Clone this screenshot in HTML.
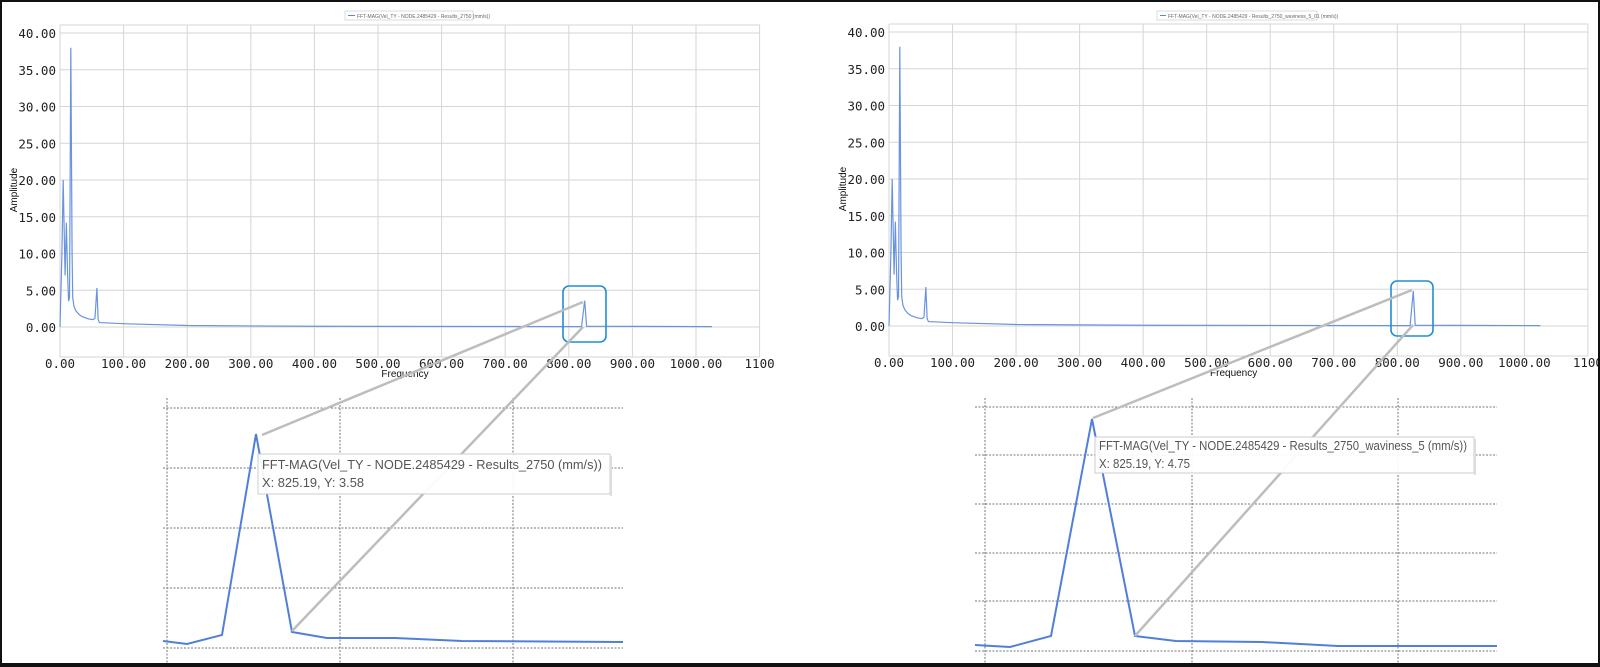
<!DOCTYPE html>
<html><head><meta charset="utf-8"><style>
html,body{margin:0;padding:0;background:#fff;}
svg{display:block}
.t{font-family:"DejaVu Sans Mono","Liberation Mono",monospace;font-size:12.5px;fill:#222}
.s{font-family:"Liberation Sans",sans-serif;font-size:10px;fill:#111}
.tip{font-family:"Liberation Sans",sans-serif;font-size:13px;fill:#555}
</style></head><body>
<svg width="1600" height="667" viewBox="0 0 1600 667" xmlns="http://www.w3.org/2000/svg">
<rect x="0" y="0" width="1600" height="667" fill="#fff"/>
<defs>
<g id="grid">
 <g stroke="#d6d6d6" stroke-width="1" fill="none">
  <path d="M0 -294H700M0 -257.25H700M0 -220.5H700M0 -183.75H700M0 -147H700M0 -110.25H700M0 -73.5H700M0 -36.75H700M0 0H700M0 -302H700M0 30H700"/>
  <path d="M0 -302V30M63.6 -302V30M127.2 -302V30M190.8 -302V30M254.4 -302V30M318 -302V30M381.6 -302V30M445.2 -302V30M508.8 -302V30M572.4 -302V30M636 -302V30M699.6 -302V30"/>
 </g>
 <g class="t" text-anchor="end">
  <text x="-4" y="-289">40.00</text><text x="-4" y="-252">35.00</text><text x="-4" y="-215.5">30.00</text><text x="-4" y="-178.7">25.00</text><text x="-4" y="-142">20.00</text><text x="-4" y="-105.2">15.00</text><text x="-4" y="-68.5">10.00</text><text x="-4" y="-31.7">5.00</text><text x="-4" y="5">0.00</text>
 </g>
 <g class="t" text-anchor="middle">
  <text x="0" y="41">0.00</text><text x="63.6" y="41">100.00</text><text x="127.2" y="41">200.00</text><text x="190.8" y="41">300.00</text><text x="254.4" y="41">400.00</text><text x="318" y="41">500.00</text><text x="381.6" y="41">600.00</text><text x="445.2" y="41">700.00</text><text x="508.8" y="41">800.00</text><text x="572.4" y="41">900.00</text><text x="636" y="41">1000.00</text><text x="699.6" y="41">1100</text>
 </g>
 <text class="s" x="345" y="50" text-anchor="middle" font-size="11.5">Frequency</text>
 <text class="s" x="0" y="0" font-size="11.5" text-anchor="middle" transform="translate(-43,-137) rotate(-90)">Amplitude</text>
</g>
</defs>

<!-- LEFT CHART -->
<g transform="translate(60,327)"><use href="#grid"/></g>
<rect x="345" y="11" width="128" height="9" fill="#fff" stroke="#ccc" stroke-width="0.7"/>
<line x1="348" y1="15.5" x2="355" y2="15.5" stroke="#5b86d8"/>
<text x="357" y="18" font-family="Liberation Sans,sans-serif" font-size="5" fill="#666">FFT-MAG(Vel_TY - NODE.2485429 - Results_2750 (mm/s))</text>
<g transform="translate(60,327) scale(0.636,-7.35)">
<path vector-effect="non-scaling-stroke" fill="none" stroke="#6a93de" stroke-width="1.2" d="M0 0 L3 10 L5 20 L8 7 L10 14.2 L12 7 L13.5 3.5 L15 4 L17 38 L19 10 L20 4 L22 2.8 L25 2.2 L30 1.7 L35 1.4 L45 1.1 L52 1 L55 1.2 L58 5.3 L60 1 L62 0.6 L100 0.45 L200 0.2 L400 0.1 L820 0.05 L825 3.58 L828 0.1 L1025 0.05"/>
</g>
<rect x="563" y="286" width="43" height="56" rx="6" fill="none" stroke="#1f8fd1" stroke-width="1.6"/>

<!-- RIGHT CHART -->
<g transform="translate(889,326) scale(0.999,1)"><use href="#grid"/></g>
<rect x="1157" y="11" width="160" height="9" fill="#fff" stroke="#ccc" stroke-width="0.7"/>
<line x1="1160" y1="15.5" x2="1166" y2="15.5" stroke="#5b86d8"/>
<text x="1168" y="18" font-family="Liberation Sans,sans-serif" font-size="5" fill="#666">FFT-MAG(Vel_TY - NODE.2485429 - Results_2750_waviness_5_01 (mm/s))</text>
<g transform="translate(889,326) scale(0.6355,-7.35)">
<path vector-effect="non-scaling-stroke" fill="none" stroke="#6a93de" stroke-width="1.2" d="M0 0 L3 10 L5 20 L8 7 L10 14.2 L12 7 L13.5 3.5 L15 4 L17 38 L19 10 L20 4 L22 2.8 L25 2.2 L30 1.7 L35 1.4 L45 1.1 L52 1 L55 1.2 L58 5.3 L60 1 L62 0.6 L100 0.45 L200 0.2 L400 0.1 L820 0.05 L825 4.75 L828 0.1 L1025 0.05"/>
</g>
<rect x="1391" y="281" width="42" height="55" rx="6" fill="none" stroke="#1f8fd1" stroke-width="1.6"/>

<!-- LEFT INSET -->
<g stroke="#777" stroke-width="1" stroke-dasharray="2,1.5" fill="none">
 <path d="M163 408H623M163 468H623M163 528H623M163 588H623M163 648H623"/>
 <path d="M167 398V667M340 398V667M513 398V667"/>
</g>
<path d="M163 641L187 644L222 635L256 434L292 632L327 638L395 638L462 641L623 642" fill="none" stroke="#4f7fd9" stroke-width="2"/>
<g stroke="#bdbdbd" stroke-width="2.5" fill="none">
 <path d="M262 435L583 302"/><path d="M292 631L583 327"/>
</g>
<rect x="258" y="454" width="352" height="40" fill="#fff" fill-opacity="0.93" stroke="#ccc" stroke-width="1"/>
<rect x="610" y="456" width="2" height="40" fill="#ddd"/>
<text class="tip" x="262" y="469" textLength="340" lengthAdjust="spacingAndGlyphs">FFT-MAG(Vel_TY - NODE.2485429 - Results_2750 (mm/s))</text>
<text class="tip" x="262" y="487" textLength="102" lengthAdjust="spacingAndGlyphs">X: 825.19, Y: 3.58</text>

<!-- RIGHT INSET -->
<g stroke="#777" stroke-width="1" stroke-dasharray="2,1.5" fill="none">
 <path d="M975 407H1497M975 455H1497M975 504H1497M975 553H1497M975 601H1497M975 651H1497"/>
 <path d="M985 398V667M1192 398V667M1398 398V667"/>
</g>
<path d="M975 645L1010 647L1051 636L1092 419L1135 636L1176 641L1262 642L1338 646L1497 646" fill="none" stroke="#4f7fd9" stroke-width="2"/>
<g stroke="#bdbdbd" stroke-width="2.5" fill="none">
 <path d="M1093 418L1412 290"/><path d="M1135 636L1413 325"/>
</g>
<rect x="1095" y="437" width="379" height="36" fill="#fff" fill-opacity="0.93" stroke="#ccc" stroke-width="1"/>
<rect x="1474" y="439" width="2" height="36" fill="#ddd"/>
<text class="tip" x="1099" y="450" textLength="368" lengthAdjust="spacingAndGlyphs">FFT-MAG(Vel_TY - NODE.2485429 - Results_2750_waviness_5 (mm/s))</text>
<text class="tip" x="1099" y="468" textLength="91" lengthAdjust="spacingAndGlyphs">X: 825.19, Y: 4.75</text>

<!-- frame -->
<rect x="1" y="1" width="1598" height="665" fill="none" stroke="#111" stroke-width="2"/>
<rect x="0" y="663" width="1600" height="4" fill="#111"/>
</svg>
</body></html>
